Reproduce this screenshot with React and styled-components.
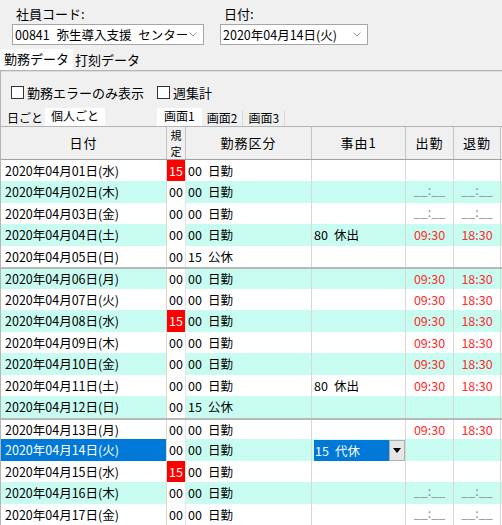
import React from "react";
import styled, { createGlobalStyle } from "styled-components";

const GlobalStyle = createGlobalStyle`
  html, body {
    margin: 0;
    padding: 0;
    overflow: hidden;
    background: #f0f0f0;
  }
  body {
    font-family: "Noto Sans CJK JP", "Noto Sans", sans-serif;
    font-size: 13px;
    color: #000;
  }
`;

const rows = [
  { d: "01", w: "水", k: "15", code: "00", name: "日勤", time: "none" },
  { d: "02", w: "木", k: "00", code: "00", name: "日勤", time: "blank" },
  { d: "03", w: "金", k: "00", code: "00", name: "日勤", time: "blank" },
  { d: "04", w: "土", k: "00", code: "00", name: "日勤", reason: "80 休出", time: "set" },
  { d: "05", w: "日", k: "00", code: "15", name: "公休", time: "none" },
  { d: "06", w: "月", k: "00", code: "00", name: "日勤", time: "set", week: true },
  { d: "07", w: "火", k: "00", code: "00", name: "日勤", time: "set" },
  { d: "08", w: "水", k: "15", code: "00", name: "日勤", time: "set" },
  { d: "09", w: "木", k: "00", code: "00", name: "日勤", time: "set" },
  { d: "10", w: "金", k: "00", code: "00", name: "日勤", time: "set" },
  { d: "11", w: "土", k: "00", code: "00", name: "日勤", reason: "80 休出", time: "set" },
  { d: "12", w: "日", k: "00", code: "15", name: "公休", time: "none" },
  { d: "13", w: "月", k: "00", code: "00", name: "日勤", time: "set", week: true },
  { d: "14", w: "火", k: "00", code: "00", name: "日勤", time: "none", selected: true },
  { d: "15", w: "水", k: "15", code: "00", name: "日勤", time: "none" },
  { d: "16", w: "木", k: "00", code: "00", name: "日勤", time: "blank" },
  { d: "17", w: "金", k: "00", code: "00", name: "日勤", time: "blank" },
];

const COLS = "166px 19px 126px 94px 48px 47px";
const TEAL = "#c8fcf1";

const Chevron = () => (
  <svg width="8" height="5" viewBox="0 0 8 5">
    <path d="M0.5 0.5 L4 4 L7.5 0.5" fill="none" stroke="#9a9a9a" strokeWidth="1" />
  </svg>
);

const App = () => {
  return (
    <Page>
      <GlobalStyle />
      <Fields>
        <Field>
          <Label>社員コード:</Label>
          <Combo $w={192}>
            <ComboText $wide>00841 弥生導入支援 センター</ComboText>
            <Chevron />
          </Combo>
        </Field>
        <Field>
          <Label>日付:</Label>
          <Combo $w={148}>
            <ComboText>2020年04月14日(火)</ComboText>
            <Chevron />
          </Combo>
        </Field>
      </Fields>

      <Tabs>
        <Tab $active>勤務データ</Tab>
        <Tab>打刻データ</Tab>
      </Tabs>

      <Panel>
        <Checks>
          <Check>
            <Box />
            勤務エラーのみ表示
          </Check>
          <Check>
            <Box />
            週集計
          </Check>
        </Checks>

        <SubTabs>
          <SubGroup>
            <SubTab $pad={2}>日ごと</SubTab>
            <SubTab $active $pad={6}>個人ごと</SubTab>
          </SubGroup>
          <SubGroup>
            <SubTab $active $pad={7}>画面1</SubTab>
            <SubTab $boxed $pad={5}>画面2</SubTab>
            <SubTab $boxed $pad={5}>画面3</SubTab>
          </SubGroup>
        </SubTabs>

        <Table>
          <HeaderRow>
            <HeadCell>日付</HeadCell>
            <HeadCell $narrow>
              <span>規</span>
              <span>定</span>
            </HeadCell>
            <HeadCell>勤務区分</HeadCell>
            <HeadCell>事由1</HeadCell>
            <HeadCell>出勤</HeadCell>
            <HeadCell>退勤</HeadCell>
          </HeaderRow>
          {rows.map((r, i) => {
            const teal = i % 2 === 1;
            return (
              <Row key={r.d} $teal={teal} $week={r.week}>
                <DateCell $sel={r.selected}>
                  2020年04月{r.d}日({r.w})
                </DateCell>
                <RuleCell $red={r.k === "15"}>{r.k}</RuleCell>
                <Cell>
                  <Code>{r.code}</Code>
                  {r.name}
                </Cell>
                <Cell>
                  {r.selected ? (
                    <EditCombo>
                      <EditText>
                        <Code>15</Code>代休
                      </EditText>
                      <EditButton>
                        <svg width="8" height="5" viewBox="0 0 8 5">
                          <path d="M0 0 H8 L4 5 Z" fill="#000" />
                        </svg>
                      </EditButton>
                    </EditCombo>
                  ) : r.reason ? (
                    <>
                      <Code>{r.reason.split(" ")[0]}</Code>
                      {r.reason.split(" ")[1]}
                    </>
                  ) : null}
                </Cell>
                <TimeCell $kind={r.time}>
                  {r.time === "set" ? "09:30" : r.time === "blank" ? "__:__" : ""}
                </TimeCell>
                <TimeCell $kind={r.time}>
                  {r.time === "set" ? "18:30" : r.time === "blank" ? "__:__" : ""}
                </TimeCell>
              </Row>
            );
          })}
        </Table>
      </Panel>
    </Page>
  );
};

export default App;

const Page = styled.div`
  width: 502px;
  height: 525px;
  display: flex;
  flex-direction: column;
  overflow: hidden;
`;

const Fields = styled.div`
  display: flex;
  gap: 16px;
  padding: 5px 0 0 12px;
  height: 52px;
  box-sizing: border-box;
`;

const Field = styled.div`
  display: flex;
  flex-direction: column;
  gap: 1px;
`;

const Label = styled.div`
  padding-left: 4px;
  line-height: 18px;
`;

const Combo = styled.div`
  width: ${(p) => p.$w}px;
  height: 21px;
  box-sizing: border-box;
  background: #fff;
  border: 1px solid #a6a6a6;
  display: flex;
  align-items: center;
  gap: 2px;
  padding: 0 6px 0 2px;
  white-space: nowrap;
`;

const ComboText = styled.span`
  flex: 1;
  min-width: 0;
  overflow: hidden;
  font-size: 12.5px;
  word-spacing: ${(p) => (p.$wide ? "4px" : "0")};
`;

const Tabs = styled.div`
  display: flex;
  height: 21px;
  align-items: flex-end;
`;

const Tab = styled.div`
  height: ${(p) => (p.$active ? "21px" : "20px")};
  line-height: 20px;
  padding: 0 ${(p) => (p.$active ? "4px" : "2px")};
  background: ${(p) => (p.$active ? "#fff" : "#f0f0f0")};
  box-sizing: border-box;
`;

const Panel = styled.div`
  flex: 1;
  border-top: 1px solid #b4b4b4;
  border-left: 1px solid #b4b4b4;
  box-shadow: inset 0 1px 0 #dcdcdc;
  display: flex;
  flex-direction: column;
`;

const Checks = styled.div`
  display: flex;
  gap: 13px;
  padding: 14px 0 0 10px;
  height: 37px;
  box-sizing: border-box;
`;

const Check = styled.label`
  display: flex;
  align-items: center;
  gap: 3px;
  height: 16px;
`;

const Box = styled.span`
  width: 13px;
  height: 13px;
  box-sizing: border-box;
  border: 1px solid #333;
  background: #fff;
`;

const SubTabs = styled.div`
  display: flex;
  gap: 52px;
  padding-left: 4px;
  height: 19px;
  box-sizing: border-box;
  border-bottom: 1px solid #b4b4b4;
`;

const SubGroup = styled.div`
  display: flex;
  align-items: flex-end;
`;

const SubTab = styled.div`
  height: ${(p) => (p.$active ? "18px" : "16px")};
  line-height: 16px;
  box-sizing: border-box;
  font-size: 12px;
  padding: 0 ${(p) => p.$pad}px;
  background: ${(p) => (p.$active ? "#fff" : "#f0f0f0")};
  border-right: ${(p) => (p.$boxed ? "1px solid #dadada" : "none")};
`;

const Table = styled.div`
  display: flex;
  flex-direction: column;
`;

const HeaderRow = styled.div`
  display: grid;
  grid-template-columns: ${COLS};
  height: 33px;
  background: #f0f0f0;
  border-bottom: 1px solid #a0a0a0;
  box-sizing: border-box;
`;

const HeadCell = styled.div`
  display: flex;
  flex-direction: ${(p) => (p.$narrow ? "column" : "row")};
  align-items: center;
  justify-content: center;
  border-right: 1px solid #c4c4c4;
  font-size: ${(p) => (p.$narrow ? "11px" : "13px")};
  line-height: 16px;
  letter-spacing: ${(p) => (p.$narrow ? "0" : "1px")};
`;

const Row = styled.div`
  display: grid;
  grid-template-columns: ${COLS};
  height: 21.5px;
  box-sizing: border-box;
  background: ${(p) => (p.$teal ? TEAL : "#fff")};
  border-top: ${(p) => (p.$week ? "2px solid #b8b8b8" : "none")};
  font-size: 12.5px;
`;

const Cell = styled.div`
  display: flex;
  align-items: center;
  padding-left: 2px;
  border-right: 1px solid #d8d8d8;
  white-space: nowrap;
  position: relative;
`;

const DateCell = styled(Cell)`
  padding-left: 4px;
  background: ${(p) => (p.$sel ? "#0078d7" : "transparent")};
  color: ${(p) => (p.$sel ? "#fff" : "#000")};
`;

const RuleCell = styled(Cell)`
  justify-content: center;
  padding-left: 0;
  background: ${(p) => (p.$red ? "#ff0000" : "#fff")};
  color: ${(p) => (p.$red ? "#fff" : "#000")};
  border-right: 1px solid #e4e4e4;
`;

const Code = styled.span`
  margin-right: 6px;
`;

const TimeCell = styled(Cell)`
  justify-content: center;
  padding-left: 0;
  align-items: ${(p) => (p.$kind === "blank" ? "flex-start" : "center")};
  padding-top: ${(p) => (p.$kind === "blank" ? "1px" : "0")};
  color: ${(p) => (p.$kind === "blank" ? "#8c8c8c" : "#ff2a2a")};
  line-height: 15px;
`;

const EditCombo = styled.div`
  position: absolute;
  left: 2px;
  top: 1px;
  right: 0;
  bottom: 0;
  display: flex;
  background: #fff;
`;

const EditText = styled.div`
  flex: 1;
  background: #0078d7;
  color: #fff;
  display: flex;
  align-items: center;
  padding-left: 1px;
`;

const EditButton = styled.div`
  width: 16px;
  background: #e6e6e6;
  border: 1px solid #adadad;
  box-sizing: border-box;
  display: flex;
  align-items: center;
  justify-content: center;
`;
